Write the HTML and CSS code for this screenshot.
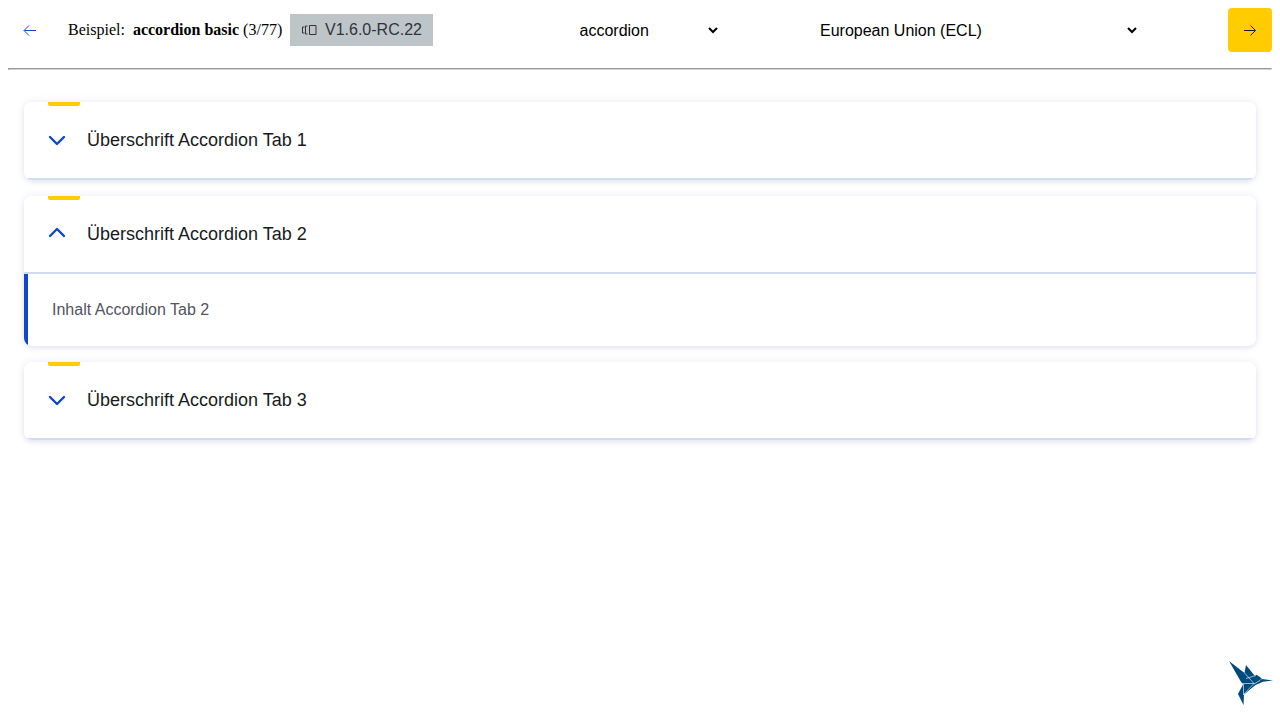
FILE: index.html
```html
<!DOCTYPE html>
<html lang="de">
<head>
<meta charset="utf-8">
<title>accordion basic</title>
<link rel="stylesheet" href="styles.css">
</head>
<body>
<header class="toolbar">
  <button class="nav" type="button" aria-label="Zurück"><svg width="14" height="14" viewBox="0 0 14 14"><path d="M13 7.500H1.500M6 2.500L1 7.500L6 12.500"/></svg></button>
  <div class="example">Beispiel:&nbsp; <b>accordion basic</b> (3/77)</div>
  <div class="badge"><svg width="15" height="12" viewBox="0 0 15 12"><path d="M7.500 1.500h6.500v9h-6.500zM5.500 2H3.500v8h2M2.500 3H.5v6h2"/></svg><span>V1.6.0-RC.22</span></div>
  <div class="select component"><span>accordion</span><svg width="10" height="7" viewBox="0 0 10 7"><path d="M1 1l4 4l4-4"/></svg></div>
  <div class="select theme"><span>European Union (ECL)</span><svg width="10" height="7" viewBox="0 0 10 7"><path d="M1 1l4 4l4-4"/></svg></div>
  <button class="nav primary" type="button" aria-label="Weiter"><svg width="14" height="14" viewBox="0 0 14 14"><path d="M1 7.500h11.300M7.500 2.500l5 5l-5 5"/></svg></button>
</header>
<hr class="divider">
<main class="accordions">
  <section class="card">
    <div class="heading"><svg width="18" height="18" viewBox="0 0 18 18"><path d="M2 6l7 7l7-7"/></svg><span>Überschrift Accordion Tab 1</span></div>
  </section>
  <section class="card">
    <div class="heading"><svg width="18" height="18" viewBox="0 0 18 18"><path d="M2 11l7-7l7 7"/></svg><span>Überschrift Accordion Tab 2</span></div>
    <div class="content">Inhalt Accordion Tab 2</div>
  </section>
  <section class="card">
    <div class="heading"><svg width="18" height="18" viewBox="0 0 18 18"><path d="M2 6l7 7l7-7"/></svg><span>Überschrift Accordion Tab 3</span></div>
  </section>
</main>
<svg class="bird" width="46" height="46" viewBox="0 0 46 46">
  <path d="M1 1L16.500 13L18 5L26.500 15.500L28.500 14.800L32 17L34 19L45 20.500L35 21.700L27.500 25L16 34.500L15.500 45L10 34L15 24.500L12.500 21z"/>
  <path class="seams" d="M16.500 13L26 23.500M14 23.500H26L15.500 34.500M15.500 24V35M18 18.500L28 15.500M26 24L32 20.500M32 20.500L34 18.500"/>
</svg>
</body>
</html>
```
FILE: styles.css
```css
* { box-sizing: border-box; }
body { margin: 8px; background: #fff; color: #000; font: 16px "Liberation Serif", serif; }
svg { display: block; flex: none; fill: none; stroke: currentColor; }
.toolbar { display: flex; align-items: center; height: 44px; }
.nav { display: flex; align-items: center; justify-content: center; width: 44px; height: 44px; padding: 0; border: 0; border-radius: 4px; background: none; color: #0e47cb; }
.nav svg { stroke-width: 1; }
.primary { margin-left: auto; background: #ffcc00; color: #171a22; }
.example { width: 222px; margin-left: 16px; white-space: nowrap; }
.badge { display: flex; align-items: center; width: 143px; height: 32px; padding-left: 12px; gap: 8px; background: #bec5c9; color: #303438; font: 16px "Liberation Sans", sans-serif; }
.badge svg { stroke-width: 1; }
.select { display: flex; align-items: center; justify-content: space-between; font: 16px "Liberation Sans", sans-serif; }
.select span { padding-top: 2px; }
.select svg { stroke-width: 2; }
.component { width: 138.500px; margin-left: 146.500px; }
.theme { width: 317px; margin-left: 102px; }
.divider { height: 2px; margin: 16px 0 32px; border: 1px solid; border-color: #9a9a9a #ededed #d0d0d0 #9a9a9a; }
.accordions { display: grid; gap: 16px; padding: 0 16px 32px; font-family: "Liberation Sans", sans-serif; }
.card { overflow: hidden; border-radius: 8px; background: #fff; box-shadow: 0 2px 4px rgba(9, 49, 142, .08), 0 0 10px rgba(4, 40, 160, .08); }
.heading { position: relative; display: flex; align-items: center; gap: 21px; height: 78px; padding: 0 24px; border-bottom: 2px solid #cfdaf5; background: #fff; color: #171a22; font-size: 18px; }
.heading::before { content: ""; position: absolute; top: 0; left: 24px; width: 32px; height: 4px; border-radius: 0 0 2px 2px; background: #ffcc00; }
.heading svg { color: #0e47cb; stroke-width: 2.400; stroke-linecap: round; stroke-linejoin: round; }
.content { display: flex; align-items: center; height: 72px; padding-left: 24px; border-left: 4px solid #0e47cb; color: #515560; font-size: 16px; }
.bird { position: fixed; left: 1228px; top: 660px; fill: #004b7c; stroke: none; }
.bird .seams { fill: none; stroke: #fff; stroke-width: .6; }
```
